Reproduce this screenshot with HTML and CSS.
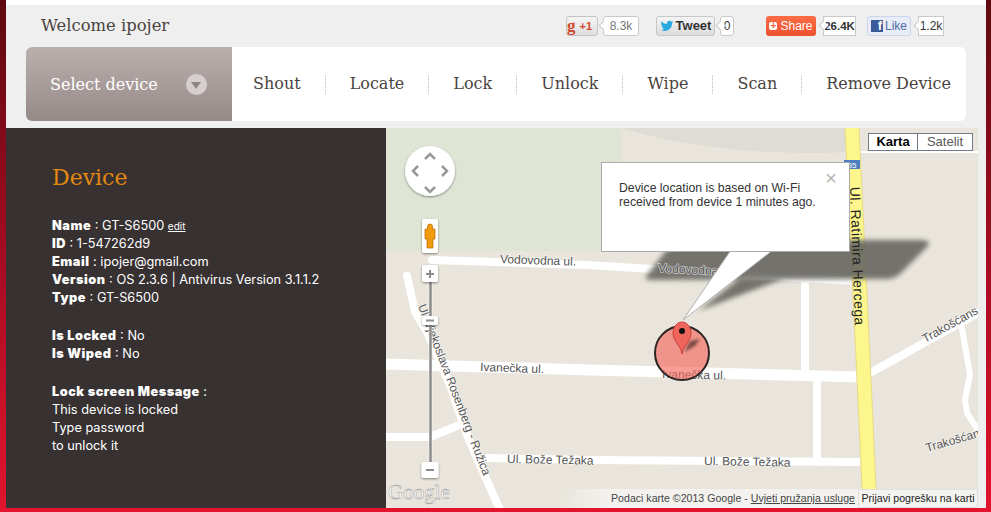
FILE: index.html
```html
<!DOCTYPE html>
<html lang="en">
<head>
    <meta charset="UTF-8">
    <title>Device</title>
    <link rel="stylesheet" href="styles.css">
</head>
<body>
    <div class="page">
        <!-- Welcome and share buttons -->
        <header class="topbar">
            <div class="welcome">Welcome ipojer</div>
            <div class="social">
                <div class="social-item gplus-item">
                    <span class="btn btn-gplus"><span class="gplus-g">g</span><b>+1</b></span>
                    <span class="count count-gplus">8.3k</span>
                </div>
                <div class="social-item tweet-item">
                    <span class="btn btn-tweet">
                        <svg class="bird" viewBox="0 0 24 24"><path d="M23 5c-.8.4-1.700.6-2.600.7.900-.6 1.600-1.400 2-2.500-.9.500-1.800.9-2.900 1.100C18.700 3.400 17.500 2.900 16.200 2.900c-2.500 0-4.500 2-4.500 4.500 0 .4 0 .7.100 1C8 8.200 4.700 6.400 2.500 3.700c-.4.700-.6 1.400-.6 2.300 0 1.600.8 2.900 2 3.700-.7 0-1.400-.2-2-.6v.1c0 2.200 1.600 4 3.600 4.400-.4.100-.8.200-1.200.2-.3 0-.6 0-.8-.1.600 1.800 2.200 3.100 4.200 3.100-1.500 1.200-3.500 1.900-5.600 1.900-.4 0-.7 0-1.100-.1 2 1.300 4.400 2 6.900 2 8.300 0 12.800-6.900 12.800-12.800v-.6c.9-.6 1.600-1.400 2.300-2.200z"/></svg>Tweet
                    </span>
                    <span class="count count-tweet">0</span>
                </div>
                <div class="social-item share-item">
                    <span class="btn btn-share"><span class="share-plus">+</span>Share</span>
                    <span class="count count-share">26.4K</span>
                </div>
                <div class="social-item like-item">
                    <span class="btn btn-like"><span class="fb-f">f</span>Like</span>
                    <span class="count count-like">1.2k</span>
                </div>
            </div>
        </header>

        <!-- Device menu -->
        <nav class="menu">
            <div class="select-device">
                <span>Select device</span>
                <span class="select-arrow"></span>
            </div>
            <ul class="actions">
                <li>Shout</li>
                <li>Locate</li>
                <li>Lock</li>
                <li>Unlock</li>
                <li>Wipe</li>
                <li>Scan</li>
                <li>Remove Device</li>
            </ul>
        </nav>

        <main class="content">
            <aside class="sidebar">
                <h2>Device</h2>
                <p>
                    <b>Name</b> : GT-S6500 <a class="edit">edit</a><br>
                    <b>ID</b> : 1-547262d9<br>
                    <b>Email</b> : ipojer@gmail.com<br>
                    <b>Version</b> : OS 2.3.6 | Antivirus Version 3.1.1.2<br>
                    <b>Type</b> : GT-S6500
                </p>
                <p>
                    <b>Is Locked</b> : No<br>
                    <b>Is Wiped</b> : No
                </p>
                <p>
                    <b>Lock screen Message</b> :<br>
                    This device is locked<br>
                    Type password<br>
                    to unlock it
                </p>
            </aside>

            <section class="map">
                <!-- viewBox uses the coordinates of the window -->
                <svg class="map-canvas" viewBox="386 128 592 380">
                    <defs>
                        <filter id="blur" x="-10%" y="-20%" width="120%" height="140%"><feGaussianBlur stdDeviation="2.500"/></filter>
                        <filter id="blurSmall"><feGaussianBlur stdDeviation="1.500"/></filter>
                        <filter id="ctrlShadow" x="-30%" y="-30%" width="160%" height="160%"><feDropShadow dx="0" dy="1" stdDeviation="1" flood-color="#000" flood-opacity=".45"/></filter>
                    </defs>

                    <rect x="386" y="128" width="592" height="380" fill="#e9e5dc"/>
                    <rect x="386" y="128" width="235" height="123" fill="#dee5d5"/>
                    <path d="M620 128H846L845 152C790 155 700 152 620 128Z" fill="#dfdcd5"/>

                    <g class="roads">
                        <path d="M432 260L587 265L800 278L858 281"/>
                        <path class="wide" d="M386 364L590 370L860 377"/>
                        <path d="M386 437H430L457 426"/>
                        <path d="M487 458L590 460L860 462"/>
                        <path d="M407 276L415 312L427 332L450 385L467 435L500 510"/>
                        <path d="M805 281V372"/>
                        <path d="M817 378V462"/>
                        <path d="M870 373L978 313"/>
                        <path class="thin" d="M962 328L970 375L965 400L967 413L978 430"/>
                        <path class="hair" d="M858 152H978"/>
                    </g>
                    <path d="M852 128L865 400L870 510" fill="none" stroke="#e6d987" stroke-width="15"/>
                    <path d="M852 128L865 400L870 510" fill="none" stroke="#fdf68c" stroke-width="13"/>

                    <rect x="844" y="160" width="16" height="9" fill="#4a7fc0"/>
                    <text class="shield" x="852" y="168">85</text>

                    <!-- Shadow of the info window -->
                    <g class="window-shadow">
                        <path d="M665 252L680 240H920Q933 240 927 247L900 274Q895 279 885 279L650 280Q644 280 647 275Z" filter="url(#blur)"/>
                        <path d="M698 311L740 278H785Z" filter="url(#blur)"/>
                    </g>

                    <text class="lbl" transform="translate(500 263) rotate(2)">Vodovodna ul.</text>
                    <text class="lbl" transform="translate(658 272) rotate(3)">Vodovodna ul.</text>
                    <text class="lbl" transform="translate(480 371) rotate(2)">Ivanečka ul.</text>
                    <text class="lbl" transform="translate(662 378) rotate(1.500)">Ivanečka ul.</text>
                    <text class="lbl" transform="translate(507 463) rotate(1)">Ul. Bože Težaka</text>
                    <text class="lbl" transform="translate(704 465) rotate(1)">Ul. Bože Težaka</text>
                    <text class="lbl lbl-long" transform="translate(418 306) rotate(69)">Ul. Vjekoslava Rosenberg - Ružica</text>
                    <text class="lbl" transform="translate(925 343) rotate(-29)">Trakošćans</text>
                    <text class="lbl" transform="translate(927 452) rotate(-16)">Trakošćan</text>
                    <text class="lbl lbl-road" transform="translate(850 187) rotate(88)">Ul. Ratimira Hercega</text>

                    <!-- Accuracy circle and pin -->
                    <circle cx="682" cy="353" r="27" fill="#f5685f" fill-opacity=".65" stroke="#2b2422" stroke-width="2"/>
                    <path d="M684 352L690 341L700 339L695 346Z" fill="#7d4a44" filter="url(#blurSmall)"/>
                    <path d="M682 354C681 345 673 342 673 333C673 327 677 322 682 322C687 322 691 327 691 333C691 342 683 345 682 354Z" fill="#f1665c" stroke="#c8423a"/>
                    <circle cx="682" cy="331" r="3" fill="#111"/>

                    <!-- Tail of the info window -->
                    <path d="M731 250L683 320L773 250Z" fill="#fff" stroke="#b0b0b0"/>

                    <!-- Google map controls -->
                    <g filter="url(#ctrlShadow)">
                        <circle cx="430" cy="171" r="25" fill="#fff"/>
                    </g>
                    <g class="pan">
                        <path d="M425 159L430 154L435 159"/>
                        <path d="M425 187L430 192L435 187"/>
                        <path d="M418 166L413 171L418 176"/>
                        <path d="M442 166L447 171L442 176"/>
                    </g>
                    <rect x="429" y="280" width="3" height="184" fill="#8a8a8a" stroke="#fff" stroke-width=".5"/>
                    <g filter="url(#ctrlShadow)">
                        <rect x="422" y="219" width="16" height="34" rx="2" fill="#fff"/>
                        <rect x="422" y="265" width="16" height="17" rx="2" fill="#fff"/>
                        <rect x="422" y="316" width="16" height="9" rx="2" fill="#fff"/>
                        <rect x="421.500" y="462" width="17" height="16" rx="2" fill="#fff"/>
                    </g>
                    <path d="M430 224a2.500 2.500 0 0 1 2.500 2.500V229H435V239H433V248H427V239H425V229H427.500V226.500A2.500 2.500 0 0 1 430 224Z" fill="#f09c0c" stroke="#b9650a" stroke-width=".7"/>
                    <path class="zoom-mark" d="M430 270V278M426 274H434"/>
                    <path class="zoom-mark" d="M426 320.500H434"/>
                    <path class="zoom-mark" d="M426 470H434"/>

                    <text class="google" x="388" y="499">Google</text>
                </svg>

                <div class="map-type">
                    <span class="type-on">Karta</span>
                    <span>Satelit</span>
                </div>

                <div class="info-window">
                    <span class="info-close">×</span>
                    Device location is based on Wi-Fi<br>
                    received from device 1 minutes ago.
                </div>

                <div class="attribution">
                    <span class="attr-text">Podaci karte ©2013 Google - <u>Uvjeti pružanja usluge</u></span>
                    <span class="attr-report">Prijavi pogrešku na karti</span>
                </div>
            </section>
        </main>
    </div>
</body>
</html>
```

FILE: styles.css
```css
/* Global */
html, body {
    height: 512px;
    margin: 0;
    overflow: hidden;
}
body {
    background: linear-gradient(to bottom, #5e0a10 0%, #a50c22 50%, #e2142e 100%);
    font-family: "Liberation Sans", Arial, sans-serif;
}
.page {
    box-sizing: border-box;
    height: 508px;
    margin: 0 5px 0 6px;
    border-top: 5px solid #ffffff;
    background-color: #efefef;
}

/* Top bar */
.topbar {
    display: flex;
    height: 42px;
    align-items: center;
    justify-content: space-between;
}
.welcome {
    margin-left: 35px;
    margin-top: -2px;
    font-family: "DejaVu Serif", serif;
    font-size: 16.400px;
    color: #4a4340;
}
.social {
    display: flex;
    align-items: center;
    margin-right: 42px;
    margin-top: -1px;
    font-size: 12px;
}
.social-item {
    display: flex;
    align-items: center;
}
.tweet-item { margin-left: 17px; }
.share-item { margin-left: 32px; }
.like-item { margin-left: 11px; }

.btn {
    box-sizing: border-box;
    display: flex;
    align-items: center;
    justify-content: center;
    height: 20px;
    border-radius: 3px;
    font-weight: bold;
}
.btn-gplus {
    width: 32px;
    gap: 4px;
    border: 1px solid #c4c4c4;
    background: linear-gradient(#f5f5f5, #dedede);
    color: #d5482f;
    font-size: 11px;
    justify-content: flex-start;
}
.gplus-g {
    font-family: "Liberation Serif", serif;
    font-size: 17px;
    line-height: 14px;
    color: #d5482f;
}
.btn-tweet {
    width: 59px;
    gap: 2px;
    border: 1px solid #c8c8c8;
    background: linear-gradient(#f4f4f4, #dcdcdc);
    color: #333333;
    font-size: 13px;
}
.bird {
    width: 14px;
    height: 14px;
    fill: #2aa9e0;
}
.btn-share {
    width: 50px;
    gap: 3px;
    background: linear-gradient(#fb6d45, #ee5230);
    color: #ffffff;
    font-size: 12px;
    font-weight: normal;
}
.share-plus {
    display: flex;
    align-items: center;
    justify-content: center;
    width: 8px;
    height: 8px;
    border-radius: 2px;
    background-color: #ffffff;
    color: #f0603a;
    font-size: 10px;
    font-weight: bold;
}
.btn-like {
    width: 44px;
    gap: 2px;
    border: 1px solid #cbd6ec;
    background-color: #e8edf7;
    color: #4e6aa6;
    font-size: 12px;
    font-weight: normal;
}
.fb-f {
    display: flex;
    justify-content: flex-end;
    align-items: flex-end;
    box-sizing: border-box;
    width: 12px;
    height: 12px;
    padding-right: 1px;
    background-color: #3b5a9a;
    color: #ffffff;
    font-size: 13px;
    font-weight: bold;
    line-height: 12px;
    overflow: hidden;
}

/* Counter bubbles with their small notch */
.count {
    position: relative;
    box-sizing: border-box;
    display: flex;
    align-items: center;
    justify-content: center;
    height: 20px;
    margin-left: 5px;
    border: 1px solid #c9c9c9;
    border-radius: 3px;
    background-color: #ffffff;
    color: #333333;
}
.count::before {
    content: "";
    position: absolute;
    left: -4px;
    top: 5px;
    width: 6px;
    height: 6px;
    border-left: 1px solid #c9c9c9;
    border-bottom: 1px solid #c9c9c9;
    background-color: #ffffff;
    transform: rotate(45deg);
}
.count-gplus { width: 36px; color: #777777; }
.count-tweet { width: 14px; }
.count-share { width: 33px; margin-left: 7px; font-size: 11.500px; font-weight: bold; border-radius: 0; }
.count-like { width: 26px; margin-left: 7px; border-radius: 0; }

/* Menu */
.menu {
    display: flex;
    height: 74px;
    margin: 0 20px;
    border-radius: 6px;
    background-color: #ffffff;
    overflow: hidden;
}
.select-device {
    display: flex;
    flex: none;
    align-items: center;
    justify-content: space-between;
    box-sizing: border-box;
    width: 206px;
    padding: 0 25px 0 24px;
    background: linear-gradient(to bottom, #b9afad, #968a88);
    color: #ffffff;
    font-family: "DejaVu Serif", serif;
    font-size: 16px;
}
.select-arrow {
    position: relative;
    width: 21px;
    height: 21px;
    border-radius: 50%;
    background-color: #d5cfce;
}
.select-arrow::after {
    content: "";
    position: absolute;
    left: 5px;
    top: 8px;
    border-left: 5.500px solid transparent;
    border-right: 5.500px solid transparent;
    border-top: 7px solid #8f8583;
}
.actions {
    display: flex;
    align-items: center;
    margin: 0;
    padding: 0;
    list-style: none;
    font-family: "DejaVu Serif", serif;
    font-size: 16px;
    color: #4a4340;
}
.actions li {
    height: 19px;
    padding: 0 24px;
    border-right: 1px dotted #bdbdbd;
    line-height: 17px;
    white-space: nowrap;
}
.actions li:first-child {
    padding-left: 21px;
}
.actions li:last-child {
    border-right: none;
}

/* Main area */
.content {
    display: flex;
    height: 380px;
    margin-top: 7px;
}
.sidebar {
    box-sizing: border-box;
    width: 380px;
    padding: 38px 20px 0 46px;
    background-color: #373132;
    color: #ffffff;
    font-family: "Inter", sans-serif;
    font-size: 12.750px;
    line-height: 18px;
}
.sidebar h2 {
    margin: 0 0 27px;
    font-family: "DejaVu Serif", serif;
    font-size: 22px;
    font-weight: normal;
    line-height: 24px;
    color: #e3890f;
}
.sidebar p {
    margin: 0 0 20px;
}
.sidebar b {
    font-weight: 900;
    letter-spacing: .5px;
}
.edit {
    font-size: 10px;
    text-decoration: underline;
}

/* Map */
.map {
    position: relative;
    width: 592px;
    height: 380px;
    overflow: hidden;
}
.map-canvas {
    display: block;
    width: 592px;
    height: 380px;
}
.roads path {
    fill: none;
    stroke: #ffffff;
    stroke-width: 8;
    stroke-linecap: round;
    stroke-linejoin: round;
}
.roads .wide { stroke-width: 11; }
.roads .thin { stroke-width: 6; }
.roads .hair { stroke-width: 2; }
.window-shadow {
    fill: #6b6963;
    opacity: .92;
}
.lbl {
    font-family: "Liberation Sans", Arial, sans-serif;
    font-size: 12px;
    fill: #555555;
    paint-order: stroke;
    stroke: #ffffff;
    stroke-width: 1.500px;
    stroke-opacity: .6;
}
.lbl-long {
    letter-spacing: -.1px;
}
.lbl-road {
    font-size: 14px;
    letter-spacing: .45px;
    fill: #222222;
    stroke: none;
}
.shield {
    font-family: "Liberation Sans", Arial, sans-serif;
    font-size: 8px;
    fill: #ffffff;
    text-anchor: middle;
}
.pan path {
    fill: none;
    stroke: #999999;
    stroke-width: 2.500;
}
.zoom-mark {
    fill: none;
    stroke: #8c8c8c;
    stroke-width: 2;
}
.google {
    font-family: "Liberation Serif", serif;
    font-size: 21px;
    fill: #ffffff;
    stroke: #9a9a9a;
    stroke-width: .5px;
}

/* Map controls */
.map-type {
    position: absolute;
    top: 5px;
    left: 482px;
    display: flex;
    width: 105px;
    height: 18px;
    box-sizing: border-box;
    border: 1px solid #717b87;
    background-color: #ffffff;
    font-size: 13px;
    line-height: 16px;
    color: #565656;
    text-align: center;
}
.map-type span {
    flex: 1;
}
.map-type .type-on {
    flex: none;
    width: 48px;
    border-right: 1px solid #717b87;
    color: #000000;
    font-weight: bold;
}
.info-window {
    position: absolute;
    top: 34px;
    left: 215px;
    box-sizing: border-box;
    width: 249px;
    height: 90px;
    padding: 18px 17px 0;
    border: 1px solid #aaaaaa;
    background-color: #ffffff;
    color: #333333;
    font-size: 12.250px;
    line-height: 14px;
}
.info-close {
    position: absolute;
    top: 8px;
    right: 12px;
    font-size: 20px;
    color: #b4b4b4;
}
.attribution {
    position: absolute;
    right: 0;
    bottom: 0;
    display: flex;
    align-items: center;
    height: 19px;
    font-size: 10.600px;
    color: #444444;
}
.attr-text {
    padding-left: 52px;
    padding-right: 3px;
    line-height: 19px;
    white-space: nowrap;
    background: linear-gradient(to right, rgba(245, 245, 243, 0), rgba(245, 245, 243, .8) 50px);
}
.attr-report {
    box-sizing: border-box;
    width: 120px;
    border: 1px solid #e0e0e0;
    background-color: #f3f3f1;
    color: #222222;
    line-height: 17px;
    text-align: center;
    white-space: nowrap;
}
```
